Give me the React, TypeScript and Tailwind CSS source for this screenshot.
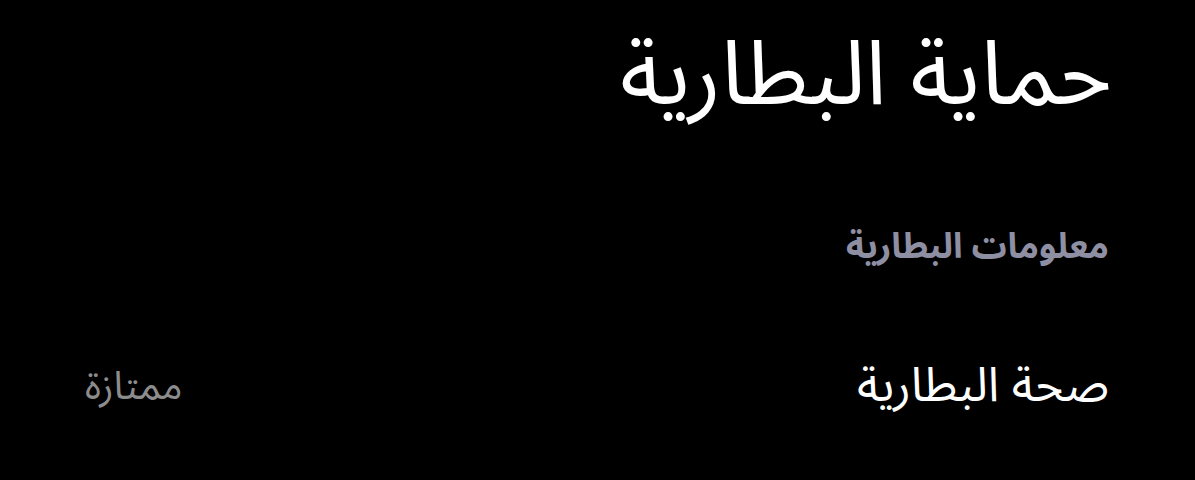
export default function App() {
  return (
    <div
      dir="rtl"
      className="w-[1195px] h-[480px] bg-black overflow-hidden pl-[85px] pr-[83px] pt-[12px] flex flex-col"
      style={{ fontFamily: '"Noto Sans Arabic", "Noto Sans", sans-serif' }}
    >
      <h1 className="text-white text-[90px] leading-[1.4] font-normal">حماية البطارية</h1>
      <section className="mt-[92px] pr-[3px] flex flex-col">
        <h2 className="text-[#8e8fa3] text-[35px] font-bold leading-none">معلومات البطارية</h2>
        <div className="mt-[97px] flex items-center justify-between">
          <span className="text-white text-[48px] leading-none">صحة البطارية</span>
          <span className="text-[#8c8c8c] text-[39px] leading-none">ممتازة</span>
        </div>
      </section>
    </div>
  );
}
